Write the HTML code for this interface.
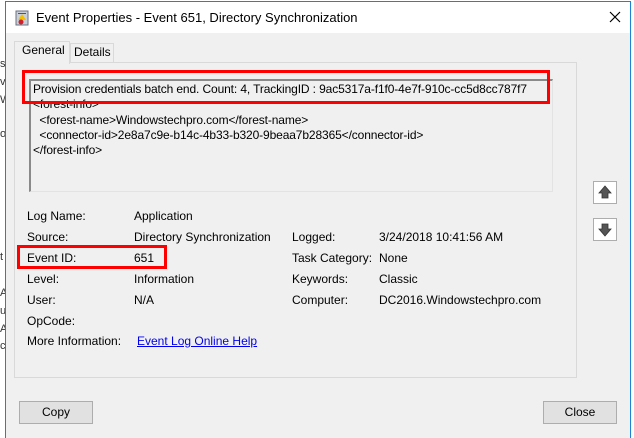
<!DOCTYPE html>
<html><head><style>
*{margin:0;padding:0;box-sizing:border-box}
body{width:634px;height:438px;background:#fff;position:relative;overflow:hidden;font-family:"Liberation Sans",sans-serif;font-size:12px;color:#000}
.a{position:absolute;white-space:nowrap}
#dlg{position:absolute;left:5px;top:1px;width:626px;height:437px;background:#f0f0f0;border:1px solid #1883d7;border-bottom:none}
#title{position:absolute;left:0;top:0;width:624px;height:31px;background:#fff}
.btn{position:absolute;background:#e1e1e1;border:1px solid #adadad;text-align:center;line-height:20px}
</style></head><body>
<div class="a" style="left:0;top:58px;font-size:11px;color:#333">s</div>
<div class="a" style="left:0;top:76px;font-size:11px;color:#333">v</div>
<div class="a" style="left:0;top:94px;font-size:11px;color:#333">W</div>
<div class="a" style="left:0;top:128px;font-size:11px;color:#333">o</div>
<div class="a" style="left:0;top:251px;font-size:11px;color:#333">t</div>
<div class="a" style="left:0;top:287px;font-size:11px;color:#333">A</div>
<div class="a" style="left:0;top:305px;font-size:11px;color:#333">u</div>
<div class="a" style="left:0;top:323px;font-size:11px;color:#333">A</div>
<div class="a" style="left:0;top:340px;font-size:11px;color:#333">c</div>
<div id="dlg">
 <div id="title">
  <svg class="a" style="left:9px;top:8px" width="14" height="16" viewBox="0 0 14 16"><rect x="1" y="1" width="12" height="14" fill="#c9cfd8" stroke="#6b7280"/><rect x="3" y="3" width="8" height="1" fill="#555"/><path d="M7 4 L11 10 L3 10Z" fill="#f3c000"/><circle cx="6" cy="12" r="2.5" fill="#d0202a"/></svg>
  <div class="a" style="left:30px;top:8px;font-size:13px">Event Properties - Event 651, Directory Synchronization</div>
  <svg class="a" style="left:603px;top:9px" width="12" height="12"><path d="M1 1L11 11M11 1L1 11" stroke="#000" stroke-width="1.2"/></svg>
 </div>
</div>
<div class="a" style="left:70px;top:43px;width:44px;height:20px;border:1px solid #d9d9d9;border-bottom:none;background:#f0f0f0"></div>
<div class="a" style="left:74px;top:45px">Details</div>
<div class="a" style="left:14px;top:62px;width:563px;height:316px;border:1px solid #d9d9d9;background:#f0f0f0"></div>
<div class="a" style="left:14px;top:41px;width:56px;height:23px;border:1px solid #d9d9d9;border-bottom:none;background:#f0f0f0"></div>
<div class="a" style="left:22px;top:43px">General</div>
<div class="a" style="left:29px;top:79px;width:524px;height:113px;border:1px solid #a0a0a0;border-right-color:#e3e3e3;border-bottom-color:#e3e3e3;border-left:2px solid #8a8a8a;border-top:2px solid #8a8a8a;background:#f0f0f0"></div>
<div class="a" style="left:33px;top:82px;line-height:15.3px;letter-spacing:-0.12px">Provision credentials batch end. Count: 4, TrackingID : 9ac5317a-f1f0-4e7f-910c-cc5d8cc787f7<br>&lt;forest-info&gt;<br>&nbsp; &lt;forest-name&gt;Windowstechpro.com&lt;/forest-name&gt;<br>&nbsp; &lt;connector-id&gt;2e8a7c9e-b14c-4b33-b320-9beaa7b28365&lt;/connector-id&gt;<br>&lt;/forest-info&gt;</div>
<div class="a" style="left:22px;top:70px;width:528px;height:34px;border:3px solid #f00"></div>
<div class="a" style="left:27px;top:206px;line-height:20.9px">Log Name:<br>Source:<br>Event ID:<br>Level:<br>User:<br>OpCode:<br>More Information:</div>
<div class="a" style="left:134px;top:206px;line-height:20.9px">Application<br>Directory Synchronization<br>651<br>Information<br>N/A</div>
<div class="a" style="left:137px;top:334px;color:#0000ee;text-decoration:underline">Event Log Online Help</div>
<div class="a" style="left:292px;top:227px;line-height:20.9px">Logged:<br>Task Category:<br>Keywords:<br>Computer:</div>
<div class="a" style="left:379px;top:227px;line-height:20.9px">3/24/2018 10:41:56 AM<br>None<br>Classic<br>DC2016.Windowstechpro.com</div>
<div class="a" style="left:17px;top:245px;width:150px;height:24px;border:3px solid #f00"></div>
<div class="a" style="left:593px;top:181px;width:24px;height:23px;border:1px solid #adadad;background:#fff"><svg width="22" height="21"><path d="M11 4L17 11H14V16H8V11H5Z" fill="#555" stroke="#333" stroke-width=".8"/></svg></div>
<div class="a" style="left:593px;top:218px;width:24px;height:23px;border:1px solid #adadad;background:#fff"><svg width="22" height="21"><path d="M11 17L17 10H14V5H8V10H5Z" fill="#555" stroke="#333" stroke-width=".8"/></svg></div>
<div class="btn" style="left:19px;top:401px;width:74px;height:23px">Copy</div>
<div class="btn" style="left:543px;top:401px;width:74px;height:23px">Close</div>
</body></html>
